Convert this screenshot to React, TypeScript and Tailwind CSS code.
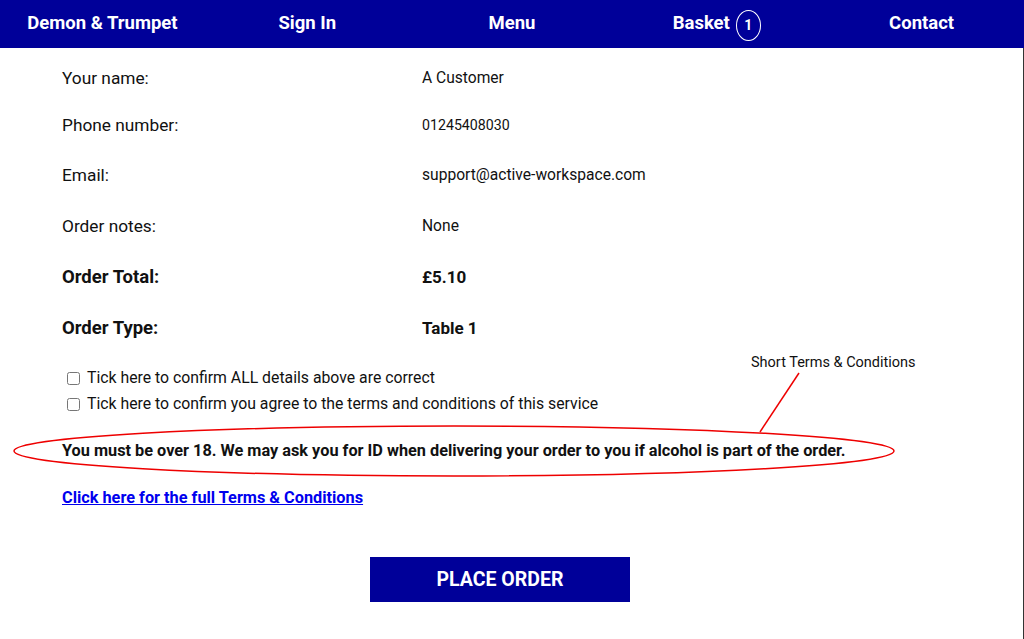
import React from "react"

const navItems = ["Demon & Trumpet", "Sign In", "Menu", "Basket", "Contact"]

const details = [
  { label: "Your name:", value: "A Customer", h: "h-[46px]", bold: false, size: "text-[15.6px]" },
  { label: "Phone number:", value: "01245408030", h: "h-[48px]", bold: false, size: "text-[14.2px]" },
  { label: "Email:", value: "support@active-workspace.com", h: "h-[51px]", bold: false, size: "text-[15.6px]" },
  { label: "Order notes:", value: "None", h: "h-[51px]", bold: false, size: "text-[15.6px]" },
  { label: "Order Total:", value: "£5.10", h: "h-[51px]", bold: true, size: "text-[17px] font-bold" },
  { label: "Order Type:", value: "Table 1", h: "h-[51px]", bold: true, size: "text-[17px] font-bold" },
]

function NavBar() {
  return (
    <nav className="grid h-12 grid-cols-5 bg-[#000099] text-[18.5px] font-bold text-white">
      {navItems.map((item) => (
        <div key={item} className="flex items-center justify-center">
          {item}
          {item === "Basket" && (
            <span className="ml-[6px] mt-[2px] flex h-[31px] w-[25px] items-center justify-center rounded-[50%] border border-white text-[14px]">
              1
            </span>
          )}
        </div>
      ))}
    </nav>
  )
}

export default function App() {
  return (
    <div className="relative min-h-[639px] bg-white font-['Roboto',sans-serif] text-[#111]">
      <NavBar />

      <main className="h-[591px] border-r border-[#333] pl-[62px] pt-[8px]">
        {details.map((d) => (
          <div key={d.label} className={`flex items-center ${d.h}`}>
            <div className={`w-[360px] ${d.bold ? "text-[18.5px] font-bold" : "text-[17.3px]"}`}>{d.label}</div>
            <div className={d.size}>{d.value}</div>
          </div>
        ))}

        <div className="mt-[11px] pl-[5px] text-[15.8px]">
          <label className="flex h-[26px] items-center gap-[7px]">
            <input type="checkbox" className="m-0 h-[13px] w-[13px]" />
            Tick here to confirm ALL details above are correct
          </label>
          <label className="flex h-[26px] items-center gap-[7px]">
            <input type="checkbox" className="m-0 h-[13px] w-[13px]" />
            Tick here to confirm you agree to the terms and conditions of this service
          </label>
        </div>

        <p className="mt-[22px] flex h-[24px] items-center text-[16.3px] font-bold">
          You must be over 18. We may ask you for ID when delivering your order to you if alcohol is part of the order.
        </p>

        <a href="#" className="mt-[23px] flex h-[24px] items-center text-[16.3px] font-bold text-[#0000ee] underline">
          Click here for the full Terms &amp; Conditions
        </a>

        <div className="mt-[47px] pl-[308px]">
          <button className="h-[45px] w-[260px] bg-[#000099] text-[19.5px] font-bold text-white">PLACE ORDER</button>
        </div>
      </main>

      {/* annotation over the screenshot */}
      <div className="pointer-events-none absolute left-[751px] top-[352px] text-[14.5px] text-[#111]">
        Short Terms &amp; Conditions
      </div>
      <svg className="pointer-events-none absolute left-0 top-0" width="1024" height="639">
        <ellipse cx="454" cy="451" rx="440" ry="25" fill="none" stroke="#ee0000" strokeWidth="1.5" />
        <line x1="799" y1="373" x2="760" y2="432" stroke="#ee0000" strokeWidth="1.5" />
      </svg>
    </div>
  )
}
